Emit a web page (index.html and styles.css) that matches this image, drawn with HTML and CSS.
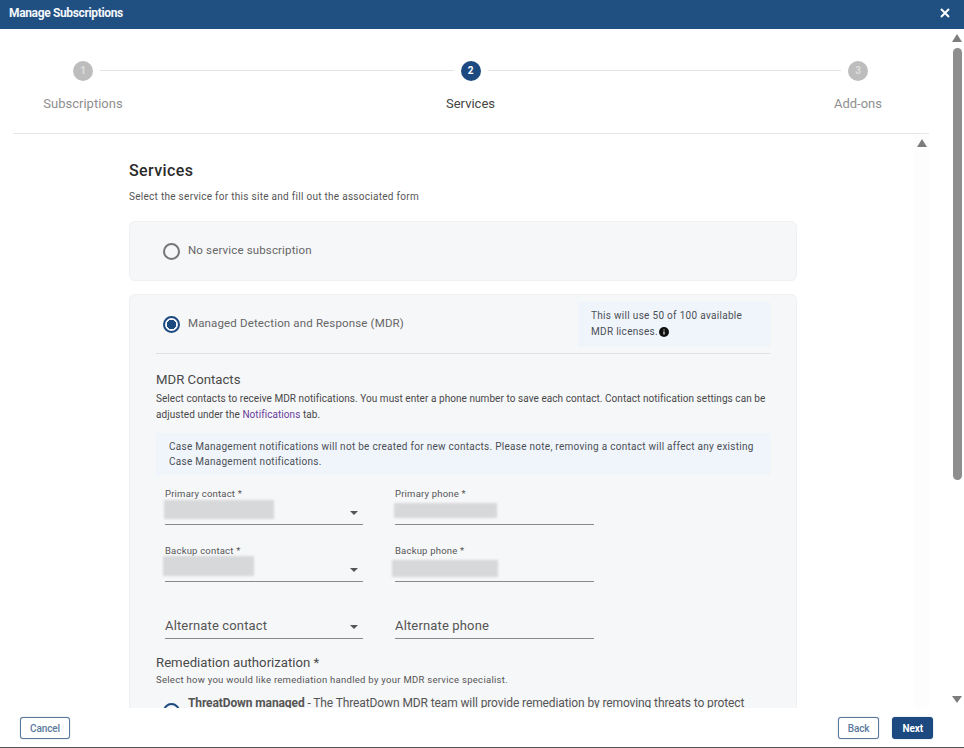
FILE: index.html
```html
<!DOCTYPE html>
<html>
  <head>
    <meta charset="utf-8">
    <title>Manage Subscriptions</title>
    <link rel="stylesheet" href="styles.css">
  </head>
  <body>
    <div class="dialog">
      <div class="titlebar">
        <span class="titlebar-text">Manage Subscriptions</span>
        <svg class="close-icon" width="10" height="10" viewBox="0 0 10 10"><path d="M1 1L9 9M9 1L1 9" stroke="#fff" stroke-width="2"/></svg>
      </div>

      <div class="main">
        <div class="content">
          <div class="stepper">
            <div class="step">
              <div class="step-circle">1</div>
              <div class="step-label">Subscriptions</div>
            </div>
            <div class="step-line"></div>
            <div class="step active">
              <div class="step-circle">2</div>
              <div class="step-label">Services</div>
            </div>
            <div class="step-line"></div>
            <div class="step">
              <div class="step-circle">3</div>
              <div class="step-label">Add-ons</div>
            </div>
          </div>

          <div class="panel">
            <div class="form">
              <h1>Services</h1>
              <p class="subtitle">Select the service for this site and fill out the associated form</p>

              <div class="card card-none">
                <span class="radio"></span>
                <span class="radio-label">No service subscription</span>
              </div>

              <div class="card card-mdr">
                <div class="mdr-head">
                  <span class="radio checked"></span>
                  <span class="radio-label">Managed Detection and Response (MDR)</span>
                  <div class="license-note">
                    This will use 50 of 100 available MDR licenses.
                    <svg class="info-icon" width="10" height="10" viewBox="0 0 10 10"><circle cx="5" cy="5" r="5" fill="#111"/><path d="M5 4.4V7.6M5 2.4V3.4" stroke="#fff" stroke-width="1.1"/></svg>
                  </div>
                </div>

                <h2>MDR Contacts</h2>
                <p class="desc">Select contacts to receive MDR notifications. You must enter a phone number to save each contact. Contact notification settings can be adjusted under the <a href="#">Notifications</a> tab.</p>
                <div class="case-note">Case Management notifications will not be created for new contacts. Please note, removing a contact will affect any existing Case Management notifications.</div>

                <div class="fields">
                  <div class="field">
                    <label>Primary contact *</label>
                    <div class="input select"><span class="redacted r-primary"></span><span class="caret"></span></div>
                  </div>
                  <div class="field">
                    <label>Primary phone *</label>
                    <div class="input"><span class="redacted r-phone"></span></div>
                  </div>
                  <div class="field">
                    <label>Backup contact *</label>
                    <div class="input select"><span class="redacted r-backup"></span><span class="caret"></span></div>
                  </div>
                  <div class="field">
                    <label>Backup phone *</label>
                    <div class="input"><span class="redacted r-backup-phone"></span></div>
                  </div>
                  <div class="field field-empty">
                    <div class="input select"><span class="placeholder">Alternate contact</span><span class="caret"></span></div>
                  </div>
                  <div class="field field-empty">
                    <div class="input"><span class="placeholder">Alternate phone</span></div>
                  </div>
                </div>

                <h2 class="remediation-title">Remediation authorization *</h2>
                <p class="desc-small">Select how you would like remediation handled by your MDR service specialist.</p>
                <div class="remediation-option">
                  <span class="radio option-radio"></span>
                  <p><b>ThreatDown managed</b> - The ThreatDown MDR team will provide remediation by removing threats to protect</p>
                </div>
              </div>
            </div>

            <div class="panel-scroll">
              <span class="arrow-up"></span>
            </div>
          </div>
        </div>

        <div class="page-scroll">
          <span class="arrow-up"></span>
          <div class="page-thumb"></div>
          <span class="arrow-down"></span>
        </div>
      </div>

      <div class="footer">
        <button class="btn">Cancel</button>
        <div class="footer-right">
          <button class="btn">Back</button>
          <button class="btn btn-primary">Next</button>
        </div>
      </div>
    </div>
  </body>
</html>
```

FILE: styles.css
```css
* {
  box-sizing: border-box;
}

body {
  margin: 0;
  overflow: hidden;
  background: #fff;
  font-family: Roboto, "Liberation Sans", sans-serif;
  color: #444;
}

.dialog {
  display: flex;
  flex-direction: column;
  width: 964px;
  height: 748px;
  border-bottom: 1px solid #555;
}

.titlebar {
  display: flex;
  flex: none;
  justify-content: space-between;
  align-items: center;
  height: 29px;
  padding: 0 14px 3px 9px;
  background: #205081;
  color: #f4f7fb;
}

.titlebar-text {
  font-size: 12px;
  font-weight: 700;
  letter-spacing: -0.35px;
}

.main {
  display: flex;
  flex: 1;
  min-height: 0;
}

.content {
  display: flex;
  flex-direction: column;
  width: 916px;
  margin-left: 13px;
}

/* Stepper */
.stepper {
  display: flex;
  flex: none;
  align-items: flex-start;
  height: 105px;
  padding: 32px 31px 0 30px;
  border-bottom: 1px solid #e6e6e6;
}

.step {
  display: flex;
  flex: none;
  flex-direction: column;
  align-items: center;
  width: 80px;
  color: #8f8f8f;
}

.step-circle {
  width: 20px;
  height: 20px;
  border-radius: 50%;
  background: #bdbdbd;
  color: #dedede;
  font-size: 10px;
  font-weight: 700;
  line-height: 20px;
  text-align: center;
}

.step-label {
  margin-top: 15px;
  font-size: 13px;
  line-height: 16px;
  white-space: nowrap;
}

.step.active {
  color: #444;
}

.step.active .step-circle {
  background: #1c4a80;
  color: #fff;
}

.step-line {
  flex: 1;
  height: 1px;
  margin: 9px -23px 0;
  background: #e4e4e4;
}

/* Inner scrolling panel */
.panel {
  display: flex;
  flex: 1;
  min-height: 0;
  overflow: hidden;
}

.form {
  flex: 1;
  padding: 28px 117px 0 116px;
  overflow: hidden;
}

h1 {
  margin: 0;
  color: #2b2b2b;
  font-size: 16px;
  font-weight: 500;
  line-height: 18px;
  letter-spacing: 0.4px;
}

.subtitle {
  margin: 10px 0 17px;
  color: #555;
  font-size: 10px;
  line-height: 14px;
  letter-spacing: 0.28px;
}

.card {
  border: 1px solid #eff0f2;
  border-radius: 6px;
  background: #f6f7f9;
}

.card-none {
  display: flex;
  align-items: center;
  height: 60px;
  margin-bottom: 13px;
  padding: 0 0 0 33px;
}

.card-mdr {
  padding: 8px 26px 0;
}

.radio {
  flex: none;
  width: 17px;
  height: 17px;
  border: 2px solid #777;
  border-radius: 50%;
}

.radio.checked {
  border-color: #1c4a80;
  background: radial-gradient(circle, #1c4a80 0 4.5px, transparent 5px);
}

.radio-label {
  margin: -3px 0 0 8px;
  color: #666;
  font-size: 11.5px;
  letter-spacing: 0.15px;
}

.mdr-head {
  display: flex;
  align-items: center;
  height: 51px;
  padding-bottom: 7px;
  padding-left: 7px;
  border-bottom: 1px solid #dfe0e2;
}

.license-note {
  width: 192px;
  height: 45px;
  margin-left: auto;
  padding: 6px 13px;
  background: #f0f5fc;
  color: #4b4f55;
  font-size: 10px;
  line-height: 16px;
  letter-spacing: 0.3px;
}

.info-icon {
  margin-left: -2px;
  vertical-align: -2px;
}

h2 {
  margin: 18px 0 0;
  color: #4a4a4a;
  font-size: 13.2px;
  font-weight: 400;
  line-height: 16px;
}

.desc {
  margin: 3px 0 10px;
  color: #484848;
  font-size: 10px;
  line-height: 16px;
  letter-spacing: 0.06px;
}

.desc a {
  color: #6a3d9a;
  text-decoration: none;
}

.case-note {
  height: 42px;
  padding: 6px 13px;
  background: #f0f5fc;
  color: #4b4f55;
  font-size: 10px;
  line-height: 15px;
  letter-spacing: 0.27px;
}

.fields {
  display: grid;
  grid-template-columns: 198px 199px;
  column-gap: 32px;
  row-gap: 20px;
  margin-top: 13px;
  padding-left: 9px;
}

.field label {
  display: block;
  color: #555;
  font-size: 9.5px;
  line-height: 12px;
  letter-spacing: 0.2px;
}

.field-empty {
  margin-top: 12px;
}

.input {
  position: relative;
  height: 25px;
  border-bottom: 1px solid #8a8a8a;
}

.select .caret {
  position: absolute;
  top: 11px;
  right: 5px;
  border-top: 4px solid #555;
  border-right: 4px solid transparent;
  border-left: 4px solid transparent;
}

.placeholder {
  display: block;
  padding-top: 4px;
  color: #555;
  font-size: 13px;
  line-height: 16px;
  letter-spacing: 0.15px;
}

.redacted {
  position: absolute;
  background: #d7d8da;
  filter: blur(1px);
}

.r-primary {
  top: 0;
  left: -1px;
  width: 110px;
  height: 19px;
}

.r-phone {
  top: 3px;
  left: -1px;
  width: 103px;
  height: 15px;
}

.r-backup {
  top: -1px;
  left: -2px;
  width: 91px;
  height: 20px;
}

.r-backup-phone {
  top: 3px;
  left: -3px;
  width: 106px;
  height: 17px;
}

.remediation-title {
  margin-top: 16px;
}

.desc-small {
  margin: 3px 0 9px;
  color: #555;
  font-size: 9.5px;
  line-height: 12px;
  letter-spacing: 0.28px;
}

.remediation-option {
  display: flex;
  gap: 8px;
  padding-left: 7px;
}

.remediation-option p {
  margin: 0;
  color: #555;
  font-size: 12px;
  line-height: 16px;
  letter-spacing: -0.11px;
  white-space: nowrap;
}

.remediation-option b {
  font-weight: 700;
}

.option-radio {
  margin-top: 8px;
  border-color: #1c4a80;
}

.panel-scroll {
  display: flex;
  flex: none;
  justify-content: center;
  width: 15px;
  padding-top: 5px;
  background: #fdfdfd;
}

/* Page scrollbar */
.page-scroll {
  display: flex;
  flex: 1;
  flex-direction: column;
  align-items: center;
  padding: 5px 0 5px 21px;
}

.page-thumb {
  flex: none;
  width: 9px;
  height: 432px;
  margin-top: 6px;
  border-radius: 5px;
  background: #8e8e8e;
}

.arrow-up {
  flex: none;
  width: 0;
  height: 0;
  border-right: 5px solid transparent;
  border-bottom: 8px solid #7d7d7d;
  border-left: 5px solid transparent;
}

.arrow-down {
  flex: none;
  width: 0;
  height: 0;
  margin-top: auto;
  border-top: 7px solid #7d7d7d;
  border-right: 5px solid transparent;
  border-left: 5px solid transparent;
}

/* Footer */
.footer {
  display: flex;
  flex: none;
  justify-content: space-between;
  align-items: flex-start;
  height: 39px;
  padding: 9px 31px 0 20px;
}

.footer-right {
  display: flex;
  gap: 13px;
}

.btn {
  height: 22px;
  padding: 0 9px;
  border: 1px solid #5a7a9c;
  border-radius: 3px;
  box-shadow: 0 0 1px #5a7a9c;
  background: #fff;
  color: #5a7a9c;
  font-family: inherit;
  font-size: 10px;
  font-weight: 500;
  letter-spacing: -0.1px;
}

.btn-primary {
  border-color: #1c4a80;
  background: #1c4a80;
  color: #fff;
  font-weight: 700;
}
```
